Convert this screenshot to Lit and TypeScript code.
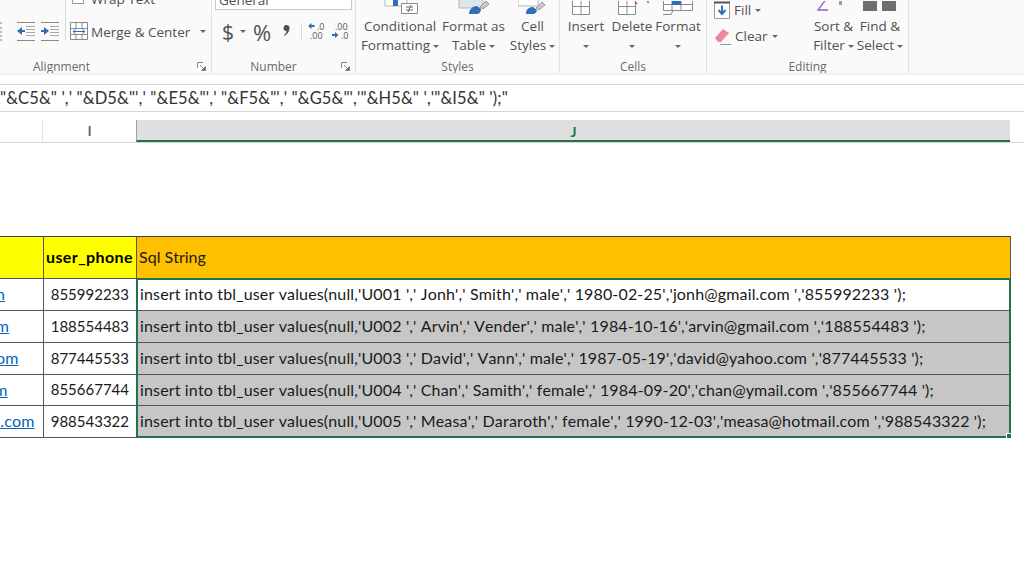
import { LitElement, css, html, svg } from 'lit';
import { customElement } from 'lit/decorators.js';

const rows = [
  ['jonh@gmail.com', '855992233', "insert into tbl_user values(null,'U001 ',' Jonh',' Smith',' male',' 1980-02-25','jonh@gmail.com ','855992233 ');"],
  ['arvin@gmail.com', '188554483', "insert into tbl_user values(null,'U002 ',' Arvin',' Vender',' male',' 1984-10-16','arvin@gmail.com ','188554483 ');"],
  ['david@yahoo.com', '877445533', "insert into tbl_user values(null,'U003 ',' David',' Vann',' male',' 1987-05-19','david@yahoo.com ','877445533 ');"],
  ['chan@ymail.com', '855667744', "insert into tbl_user values(null,'U004 ',' Chan',' Samith',' female',' 1984-09-20','chan@ymail.com ','855667744 ');"],
  ['measa@hotmail.com', '988543322', "insert into tbl_user values(null,'U005 ',' Measa',' Dararoth',' female',' 1990-12-03','measa@hotmail.com ','988543322 ');"],
];

const formula = `"&C5&" ',' "&D5&"',' "&E5&"',' "&F5&"',' "&G5&"','"&H5&" ','"&I5&" ');"`;

const caret = html`<span class="caret"></span>`;

const indentIcon = (flip: boolean) => html`<svg width="18" height="19" viewBox="0 0 18 19">
  <g stroke="#8a8a8a" fill="none">
    <path d="M0 .5h18M0 18.5h18" />
    <path d="M9 4.500h9M9 7.500h9M9 10.500h9M9 13.500h9" stroke="#a8a8a8" />
  </g>
  ${flip
    ? svg`<path d="M0 8h3V5l5 4-5 4v-3H0z" fill="#2f6fb7" />`
    : svg`<path d="M8 8H5V5L0 9l5 4v-3h3z" fill="#2f6fb7" />`}
</svg>`;

const launcher = html`<svg class="launcher" width="9" height="9" viewBox="0 0 9 9">
  <path d="M.5 6V.5H6" fill="none" stroke="#8a8a8a" />
  <path d="M3 3l4 4M8.500 4.500v4h-4z" fill="#6b6b6b" stroke="#6b6b6b" stroke-width=".7" />
</svg>`;

const gridIcon = (extra: unknown) => html`<svg width="36" height="14" viewBox="0 0 36 14">
  <path d="M4.500 -3.500h17v17h-17zM13 -3.500v17M4.500 5.500h17" fill="#fff" stroke="#8a8a8a" />
  ${extra}
</svg>`;

@customElement('app-root')
export class AppRoot extends LitElement {
  render() {
    return html`
      <div class="ribbon">
        <section class="group alignment">
          <div class="body">
            <div class="indents">
              <span class="dots"></span>
              ${indentIcon(false)} ${indentIcon(true)}
              <span class="vsep"></span>
            </div>
            <div class="merge-col">
              <div class="small-row">
                <svg width="18" height="15" viewBox="0 0 18 15"><path d="M2.500 0v11.500h11V0M5 3h6M5 7h6" fill="#fff" stroke="#8a9bb0" /></svg>
                <span>Wrap Text</span>
              </div>
              <div class="small-row merge">
                <svg width="18" height="19" viewBox="0 0 18 19">
                  <path d="M.5 .5h17v17H.5zM.5 6.500h17M.5 12.500h17M6 .5v6M12 .5v6M6 12.500v5M12 12.500v5" fill="#fff" stroke="#8a8a8a" />
                  <path d="M3 9.500h12M3 9.500l2.500-2M3 9.500l2.500 2M15 9.500l-2.500-2M15 9.500l-2.500 2" fill="none" stroke="#2f6fb7" />
                </svg>
                <span>Merge &amp; Center</span>${caret}
              </div>
            </div>
          </div>
          <div class="foot"><span class="label">Alignment</span>${launcher}</div>
        </section>

        <section class="group number">
          <div class="body column">
            <div class="format-box">General</div>
            <div class="num-row">
              <span class="dollar">$</span>${caret}
              <span class="percent">%</span>
              <svg class="comma" width="7" height="11" viewBox="0 0 7 11">
                <path d="M3.500 0a3 3 0 0 1 3 3c0 3.500-2.500 6.500-5 8l-.5-1c1.500-1 2.300-2.200 2.500-4a3 3 0 0 1 0-6z" fill="#505050" />
              </svg>
              <span class="vsep short"></span>
              <svg width="18" height="19" viewBox="0 0 18 19">
                <path d="M0 4l3.500-3v2h3v2h-3v2z" fill="#2f6fb7" />
                <text x="9" y="7.500" class="dec">.0</text>
                <text x="2" y="17" class="dec">.00</text>
              </svg>
              <svg width="18" height="19" viewBox="0 0 18 19">
                <text x="3" y="7.500" class="dec">.00</text>
                <path d="M0 12h3v-2l3.500 3-3.500 3v-2H0z" fill="#2f6fb7" />
                <text x="9" y="17" class="dec">.0</text>
              </svg>
            </div>
          </div>
          <div class="foot"><span class="label">Number</span>${launcher}</div>
        </section>

        <section class="group styles">
          <div class="body">
            <div class="big conditional">
              <svg width="36" height="15" viewBox="0 0 36 15">
                <path d="M3 -2h22v8H3z" fill="#fff" stroke="#b5b5b5" />
                <path d="M11 -2h5v8h-5z" fill="#2f6fb7" />
                <path d="M19.500 3.500h16v10h-16z" fill="#fff" stroke="#8a8a8a" />
                <path d="M24 7h7M24 10h7M29 5l-3 7" stroke="#666" fill="none" />
              </svg>
              <span>Conditional</span><span>Formatting${caret}</span>
            </div>
            <div class="big as-table">
              <svg width="34" height="15" viewBox="0 0 34 15">
                <path d="M2 -2h24v10H2z" fill="#dbe5f1" stroke="#b5b5b5" />
                <path d="M12 14c0-5 4-8 8-8l4 3c0 3-2 5-4 5z" fill="#2f6fb7" />
                <path d="M23 7l6-6 3 3-6 5z" fill="#c9c9c9" stroke="#999" />
              </svg>
              <span>Format as</span><span>Table${caret}</span>
            </div>
            <div class="big cell-styles">
              <svg width="30" height="15" viewBox="0 0 30 15">
                <path d="M0 -2h20v8H0z" fill="#fff" stroke="#b5b5b5" />
                <path d="M8 14c0-5 3-7 7-7l4 3c0 2-2 4-4 4z" fill="#2f6fb7" />
                <path d="M18 8l6-6 3 3-6 5z" fill="#c9c9c9" stroke="#999" />
              </svg>
              <span>Cell</span><span>Styles${caret}</span>
            </div>
          </div>
          <div class="foot"><span class="label">Styles</span></div>
        </section>

        <section class="group cells">
          <div class="body">
            <div class="big cell-col">
              ${gridIcon('')}
              <span>Insert</span><span class="lone">${caret}</span>
            </div>
            <div class="big cell-col">
              ${gridIcon(svg`<path d="M21 1l2 2M33 -1l1.500 3" stroke="#d8433b" stroke-width="1.500" />`)}
              <span>Delete</span><span class="lone">${caret}</span>
            </div>
            <div class="big cell-col">
              <svg width="36" height="14" viewBox="0 0 36 14">
                <path d="M3.500 -3.500h29v13h-29zM12 -3.500v13M21 -3.500v13M3.500 3.500h29" fill="#fff" stroke="#8a8a8a" />
                <path d="M12 -4h9v8h-9z" fill="#2f6fb7" />
                <path d="M3 13.500h8l2-4" fill="none" stroke="#8a8a8a" />
              </svg>
              <span>Format</span><span class="lone">${caret}</span>
            </div>
          </div>
          <div class="foot"><span class="label">Cells</span></div>
        </section>

        <section class="group editing">
          <div class="body">
            <div class="fill-col">
              <div class="small-row">
                <svg width="16" height="18" viewBox="0 0 16 18">
                  <path d="M.5 1.500h15v16H.5z" fill="#fff" stroke="#9a9a9a" />
                  <path d="M0 1.500h16" stroke="#555" stroke-width="2" />
                  <path d="M8 4.500v8M4.500 9L8 13l3.500-4" fill="none" stroke="#2f6fb7" stroke-width="2" />
                </svg>
                <span>Fill</span>${caret}
              </div>
              <div class="small-row">
                <svg width="17" height="17" viewBox="0 0 17 17">
                  <path d="M1 10l8-9 6 4-8 9H4z" fill="#ea8a9c" />
                  <path d="M6 16.500h11" stroke="#9a9a9a" />
                </svg>
                <span>Clear</span>${caret}
              </div>
            </div>
            <div class="big sort-col">
              <svg width="36" height="10" viewBox="0 0 36 10">
                <path d="M11 -3L2 9h10" fill="none" stroke="#9a5fc0" stroke-width="1.300" />
                <path d="M23 -1h3v5h-3z" fill="#9a9a9a" />
              </svg>
              <span>Sort &amp;</span><span>Filter${caret}</span>
            </div>
            <div class="big find-col">
              <svg width="36" height="10" viewBox="0 0 36 10">
                <path d="M1 -1h14v11H1zM20 -1h14v11H20z" fill="#6e6e6e" />
              </svg>
              <span>Find &amp;</span><span>Select${caret}</span>
            </div>
          </div>
          <div class="foot"><span class="label">Editing</span></div>
        </section>
      </div>

      <div class="formula"><span>${formula}</span></div>

      <div class="col-heads">
        <div class="head-blank"></div>
        <div class="head-i">I</div>
        <div class="head-j">J</div>
      </div>

      <div class="sheet">
        <div class="cell hd yellow"></div>
        <div class="cell hd yellow bold">user_phone</div>
        <div class="cell hd orange">Sql String</div>
        ${rows.map(
          (r, i) => html`
            <div class="cell link"><u>${r[0]}</u></div>
            <div class="cell phone">${r[1]}</div>
            <div class="cell sql ${i > 0 ? 'grey' : ''}">${r[2]}</div>
          `,
        )}
        <div class="selection"><span class="handle"></span></div>
      </div>
    `;
  }

  static styles = css`
    :host {
      display: block;
      width: 1024px;
      height: 587px;
      overflow: hidden;
      background: #fff;
      font-family: 'Open Sans', sans-serif;
    }

    .ribbon {
      display: flex;
      height: 75px;
      background: #fafafa;
      box-sizing: border-box;
      border-bottom: 2px solid #f0f0f0;
      overflow: hidden;
      color: #505050;
      font-size: 13.5px;
    }
    .group {
      display: flex;
      flex-direction: column;
      justify-content: flex-end;
      flex: none;
      height: 73px;
      box-sizing: border-box;
      border-right: 1px solid #e2e2e2;
    }
    .alignment { width: 212px; }
    .number { width: 144px; }
    .styles { width: 204px; }
    .cells { width: 147px; }
    .editing { width: 202px; }

    .body {
      flex: 1;
      min-height: 0;
      display: flex;
      align-items: flex-end;
      overflow: hidden;
    }
    .body.column {
      flex-direction: column;
      align-items: stretch;
      justify-content: flex-end;
    }
    .foot {
      display: flex;
      align-items: center;
      height: 14px;
      color: #6a6a6a;
      font-size: 12px;
    }
    .label {
      flex: 1;
      text-align: center;
    }
    .launcher {
      flex: none;
      margin-right: 5px;
    }
    .number .label { padding-right: 6px; }
    .alignment .label { text-align: left; padding-left: 33px; }

    .caret {
      display: inline-block;
      width: 0;
      height: 0;
      margin-left: 3px;
      vertical-align: middle;
      border-left: 3px solid transparent;
      border-right: 3px solid transparent;
      border-top: 3px solid #666;
    }
    .lone .caret { margin-left: 0; }

    .indents {
      display: flex;
      align-items: center;
      gap: 6px;
      height: 19px;
      margin-bottom: 18px;
    }
    .dots {
      width: 1px;
      height: 19px;
      margin-right: 8px;
      border-left: 2px dotted #bbb;
    }
    .vsep {
      width: 1px;
      height: 21px;
      background: #d8d8d8;
    }
    .indents .vsep { height: 44px; align-self: flex-end; }
    .merge-col {
      display: flex;
      flex-direction: column;
      gap: 14px;
      margin-left: 4px;
      margin-bottom: 18px;
    }
    .small-row {
      display: flex;
      align-items: center;
      gap: 3px;
      white-space: nowrap;
    }
    .merge .caret { margin-left: 7px; }

    .format-box {
      margin: 0 3px;
      height: 24px;
      padding-left: 3px;
      box-sizing: border-box;
      border: 1px solid #c8c8c8;
      background: #fff;
      font-size: 13.5px;
      line-height: 26px;
      flex: none;
    }
    .num-row {
      display: flex;
      align-items: center;
      height: 19px;
      margin: 12px 0 18px 10px;
    }
    .dollar { font-size: 21px; width: 12px; }
    .num-row .caret { margin-left: 6px; }
    .percent { font-size: 22px; margin-left: 7px; }
    .comma { margin-left: 12px; margin-bottom: 3px; flex: none; }
    .vsep.short { margin: 0 6px 0 11px; height: 17px; }
    .num-row svg + svg { margin-left: 6px; }
    .dec { font-size: 9px; fill: #555; font-family: 'Open Sans', sans-serif; }

    .styles .body { padding-left: 4px; }
    .cells .body { padding-left: 3px; }
    .editing .body { padding-left: 7px; }

    .big {
      display: flex;
      flex-direction: column;
      align-items: center;
      flex: none;
      line-height: 19px;
      white-space: nowrap;
      padding-bottom: 4px;
    }
    .big svg { margin-bottom: 2px; }
    .sort-col svg, .find-col svg { margin-bottom: 6px; }
    .conditional { width: 80px; }
    .as-table { width: 67px; }
    .cell-styles { width: 51px; }
    .cell-col { width: 46px; }
    .fill-col {
      width: 97px;
      display: flex;
      flex-direction: column;
      gap: 8px;
      margin-bottom: 14px;
    }
    .fill-col .small-row { gap: 4px; }
    .fill-col .caret { margin-left: 0; }
    .sort-col { width: 45px; }
    .find-col { width: 48px; }

    .formula {
      margin-top: 9px;
      height: 28px;
      box-sizing: border-box;
      border-top: 1px solid #d6d6d6;
      border-bottom: 1px solid #d6d6d6;
      display: flex;
      align-items: center;
      font-family: 'Lato', sans-serif;
      font-size: 16.5px;
      letter-spacing: 0.12px;
      font-kerning: none;
      color: #333;
      white-space: pre;
      overflow: hidden;
    }

    .col-heads {
      display: grid;
      grid-template-columns: 43px 93px 874px;
      height: 23px;
      margin-top: 8px;
      box-sizing: border-box;
      border-bottom: 1px solid #d6d6d6;
      font-family: 'Lato', sans-serif;
      font-size: 14px;
      font-weight: 700;
      text-align: center;
      line-height: 22px;
    }
    .head-blank { border-right: 1px solid #e2e2e2; }
    .head-i { color: #5b6f8a; }
    .head-j {
      color: #217346;
      background: #dfdfdf;
      box-sizing: border-box;
      border-left: 1px solid #a0a0a0;
      border-bottom: 2px solid #217346;
      height: 22px;
      line-height: 24px;
    }

    .sheet {
      position: relative;
      display: grid;
      grid-template-columns: 200px 93px 874px;
      grid-template-rows: 43px 32px 32px 32px 31px 32px;
      width: 1167px;
      margin: 93px 0 0 -156px;
      font-family: 'Lato', sans-serif;
      font-size: 16px;
      font-kerning: none;
      color: #1a1a1a;
    }
    .cell {
      display: flex;
      align-items: center;
      box-sizing: border-box;
      padding-bottom: 2px;
      border-right: 1px solid #555;
      border-bottom: 1px solid #555;
      white-space: pre;
      overflow: hidden;
    }
    .cell.hd { border-top: 1px solid #444; }
    .yellow { background: #ffff00; }
    .orange { background: #ffc000; padding-left: 2px; }
    .bold { font-weight: 700; color: #000; padding-left: 2px; letter-spacing: 0.4px; }
    .link { color: #0563c1; padding-left: 44px; letter-spacing: 0.15px; }
    .phone { justify-content: flex-end; padding-right: 7px; font-size: 15px; }
    .sql { padding-left: 3px; letter-spacing: 0.15px; }
    .grey { background: #c6c6c6; }

    .selection {
      position: absolute;
      left: 292px;
      top: 42px;
      width: 875px;
      height: 160px;
      box-sizing: border-box;
      border: 2px solid #217346;
      pointer-events: none;
    }
    .handle {
      position: absolute;
      right: -3px;
      bottom: -3px;
      width: 4px;
      height: 4px;
      background: #217346;
      border: 1px solid #fff;
    }
  `;
}

declare global {
  interface HTMLElementTagNameMap {
    'app-root': AppRoot;
  }
}
